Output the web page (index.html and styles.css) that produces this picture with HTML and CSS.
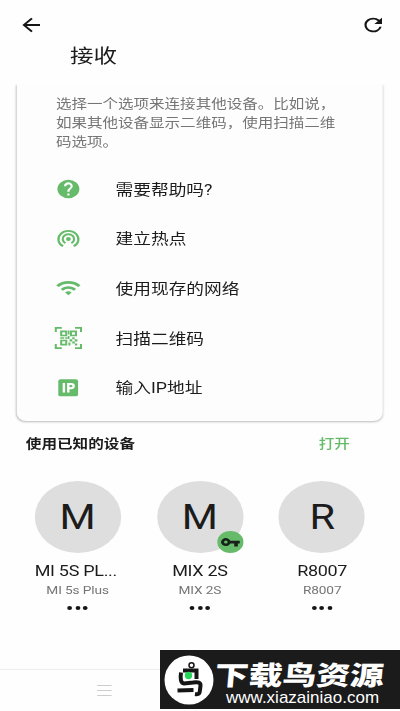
FILE: index.html
```html
<!DOCTYPE html>
<html lang="zh-CN">
<head>
<meta charset="utf-8">
<title>接收</title>
<link rel="stylesheet" href="styles.css">
</head>
<body>
<div class="screen">
  <header class="bar">
    <svg class="ic" viewBox="0 0 24 24"><path d="M20 11H7.8l5.6-5.6L12 4l-8 8 8 8 1.4-1.4L7.8 13H20z"/></svg>
    <svg class="ic" viewBox="0 0 24 24"><path d="M17.65 6.35A7.96 7.96 0 0 0 12 4a8 8 0 1 0 7.73 10h-2.08A6 6 0 1 1 12 6c1.66 0 3.14.69 4.22 1.78L13 11h7V4z"/></svg>
  </header>
  <h1 class="title">接收</h1>
  <section class="card">
    <p class="intro">选择一个选项来连接其他设备。比如说，<br>如果其他设备显示二维码，使用扫描二维<br>码选项。</p>
    <ul class="menu">
      <li><svg class="mi" viewBox="0 0 24 24"><path d="M12 2a10 10 0 1 0 0 20 10 10 0 0 0 0-20zm1 17h-2v-2h2zm2.07-7.75-.9.92C13.45 12.9 13 13.5 13 15h-2v-.5c0-1.1.45-2.1 1.17-2.83l1.24-1.26A2 2 0 1 0 10 9H8a4 4 0 1 1 7.07 2.25z"/></svg><span>需要帮助吗?</span></li>
      <li><svg class="mi" viewBox="0 0 24 24"><g fill="none" stroke="#66bb6a" stroke-width="2"><path d="M7.2 20a9.100 9.100 0 1 1 9.600 0"/><path d="M9.300 16.500a5.200 5.200 0 1 1 5.400 0"/></g><circle cx="12" cy="12" r="2.200"/></svg><span>建立热点</span></li>
      <li><svg class="mi" viewBox="0 0 24 24"><path d="m1 9 2 2a12.73 12.73 0 0 1 18 0l2-2C16.93 2.93 7.08 2.93 1 9zm8 8 3 3 3-3a4.24 4.24 0 0 0-6 0zm-4-4 2 2a7.07 7.07 0 0 1 10 0l2-2C15.14 9.14 8.87 9.14 5 13z"/></svg><span>使用现存的网络</span></li>
      <li><svg class="mi qr" viewBox="0 0 24 24"><g fill="none" stroke="#66bb6a" stroke-width="1.700"><path d="M1.500 6V1.800H6.500M17.500 1.800h5V6M1.500 18v4.200h5M17.500 22.200h5V18"/><path d="M6 5.300h4.200v4.200H6zM14.100 5.300h4.200v4.200h-4.200zM6 14.500h4.200v4.200H6z"/></g><path d="M11.500 4.500h1.400v4h-1.400zM11.500 10h1.400v3h-1.400zM5.200 11.300H8.500v1.500H5.200zM9.300 11.300h2v1.500h-2zM13 13.200h2.200v2.200H13zM15.200 11.300h2v2h-2zM17.300 13.200h2.200v2.200h-2.200zM15.200 15.400h2.200v2.200h-2.200zM12 16.500h1.700v3H12zM17.400 17.400h2v2.200h-2z"/></svg><span>扫描二维码</span></li>
      <li><svg class="mi" viewBox="0 0 24 24"><rect x="2.800" y="2.500" width="18" height="18.500" rx="2"/><path fill="#fff" fill-rule="evenodd" d="M6.800 6.500H9v10.500H6.800zM10.800 6.500h3.700a3.400 3.400 0 0 1 0 6.800H13V17h-2.200zM13 8.600v2.700h1.300a1.350 1.350 0 0 0 0-2.700z"/></svg><span>输入IP地址</span></li>
    </ul>
  </section>
  <div class="known"><h2>使用已知的设备</h2><a>打开</a></div>
  <div class="devices">
    <div class="device">
      <div class="avatar">M</div><div class="name cut">MI 5S PL...</div><div class="model">MI 5s Plus</div><div class="dots"><i></i><i></i><i></i></div>
    </div>
    <div class="device">
      <div class="avatar">M<svg class="key" viewBox="0 0 22 22"><circle cx="11" cy="11" r="11" fill="#66bb6a"/><path fill="#172019" fill-rule="evenodd" d="M10.900 9.700A4 4 0 1 0 10.900 12.500h3.300v3h3v-3h1.600V9.700zM7.200 9.600a1.500 1.500 0 1 1 0 3 1.500 1.500 0 0 1 0-3z"/></svg></div><div class="name">MIX 2S</div><div class="model">MIX 2S</div><div class="dots"><i></i><i></i><i></i></div>
    </div>
    <div class="device">
      <div class="avatar">R</div><div class="name">R8007</div><div class="model">R8007</div><div class="dots"><i></i><i></i><i></i></div>
    </div>
  </div>
  <nav class="nav"><div class="burger"></div></nav>
</div>
<aside class="mark">
  <svg class="logo" viewBox="0 0 50 50"><circle cx="25" cy="25" r="24.500" fill="#fff"/><g fill="none" stroke="#151515" stroke-width="4"><circle cx="27.500" cy="10.300" r="2.500" stroke-width="1.500"/><path d="M19 15.500H32.500V24M17 17.500Q15.500 28 20 28.500L29 27.500q8-1.500 7.500 3.500c-1 5 .5 9-5.500 8"/><path d="M13.500 35.500l16-.5"/></g><circle cx="24.500" cy="20.500" r="3.700" fill="#25d65b"/></svg>
  <div class="words"><div class="brand">下载鸟资源</div><div class="url">www.xiazainiao.com</div></div>
</aside>
</body>
</html>
```
FILE: styles.css
```css
* { box-sizing: border-box; margin: 0; padding: 0; }
html { overflow: hidden; }
body {
  width: 400px; height: 711px; overflow: hidden; position: relative;
  background: #fefefe; color: #1c1c1c;
  font-family: Roboto, "Noto Sans CJK SC", sans-serif;
}
/* The screen is laid out at 5:6 width and widened to fill the window. */
.screen {
  width: 333.333px; height: 711px; display: flex; flex-direction: column;
  transform: scaleX(1.2); transform-origin: 0 0;
}
.bar { height: 42px; padding: 14px 11.5px 0 14.6px; display: flex; justify-content: space-between; }
.ic { width: 22px; height: 22px; fill: #151515; }
.title { height: 42px; padding: 1.6px 0 0 58.3px; font-size: 19.6px; line-height: 26px; font-weight: 400; }
.card {
  width: 305.4px; height: 337px; margin-left: 13.8px; padding: 10px 0 0 32.8px;
  background: #fdfdfd; border-radius: 0 0 8px 8px; box-shadow: 0 1px 2px #bbb;
  clip-path: inset(0 -4px -4px -4px);
}
.intro { font-size: 12.95px; line-height: 19px; color: #757575; white-space: nowrap; }
.menu { list-style: none; margin-top: 12.4px; }
.menu li { height: 49.7px; display: flex; align-items: center; font-size: 14.75px; }
.menu span { margin-left: 28.1px; white-space: nowrap; }
.mi { width: 22px; height: 22px; margin: 1.4px 0 0 -0.4px; fill: #66bb6a; }
.qr { width: 24px; height: 24px; margin: 0.6px -1px 0 -1.4px; }
.known { height: 60px; padding: 12px 41.7px 0 21.5px; display: flex; justify-content: space-between; line-height: 22px; font-size: 13px; }
.known h2 { font-size: 13px; font-weight: 700; }
.known a { color: #66bb6a; font-weight: 500; }
.devices { display: flex; padding-left: 13.75px; flex: 1; }
.device { width: 101.9px; display: flex; flex-direction: column; align-items: center; }
.avatar { width: 72px; height: 72px; border-radius: 50%; background: #dedede; position: relative; font-size: 34.5px; line-height: 73px; text-align: center; }
.key { position: absolute; right: 0; bottom: 0; width: 22px; height: 22px; }
.name { margin-top: 8px; font-size: 15px; line-height: 20px; letter-spacing: -0.25px; }
.cut { margin-right: 3px; }
.model { margin-top: 1px; font-size: 11.4px; line-height: 17px; letter-spacing: -0.1px; color: #757575; }
.dots { display: flex; gap: 2.4px; margin-top: 7px; }
.dots i { width: 4px; height: 4px; border-radius: 50%; background: #151515; }
.nav { height: 42px; border-top: 1px solid #eee; padding: 15px 0 0 81px; }
.burger { width: 11.5px; height: 11px; border: solid #ccc; border-width: 1px 0; background: linear-gradient(#ccc, #ccc) 0 4px / 100% 1px no-repeat; }
.mark {
  position: absolute; left: 160px; top: 650px; width: 240px; height: 59px;
  padding-left: 4px; background: #1b1b1b; color: #fff; display: flex; overflow: hidden;
}
.logo { width: 50px; height: 50px; margin-top: 5px; flex: none; }
.words { width: 176px; padding-left: 0; white-space: nowrap; }
.brand { width: 136px; height: 36px; font: 900 26.5px/48px "Noto Sans CJK SC", sans-serif; transform: scaleX(1.275) skewX(-4deg); transform-origin: 0 100%; }
.url { margin-left: 12px; font: 17px/24px "Liberation Sans", sans-serif; }
```
